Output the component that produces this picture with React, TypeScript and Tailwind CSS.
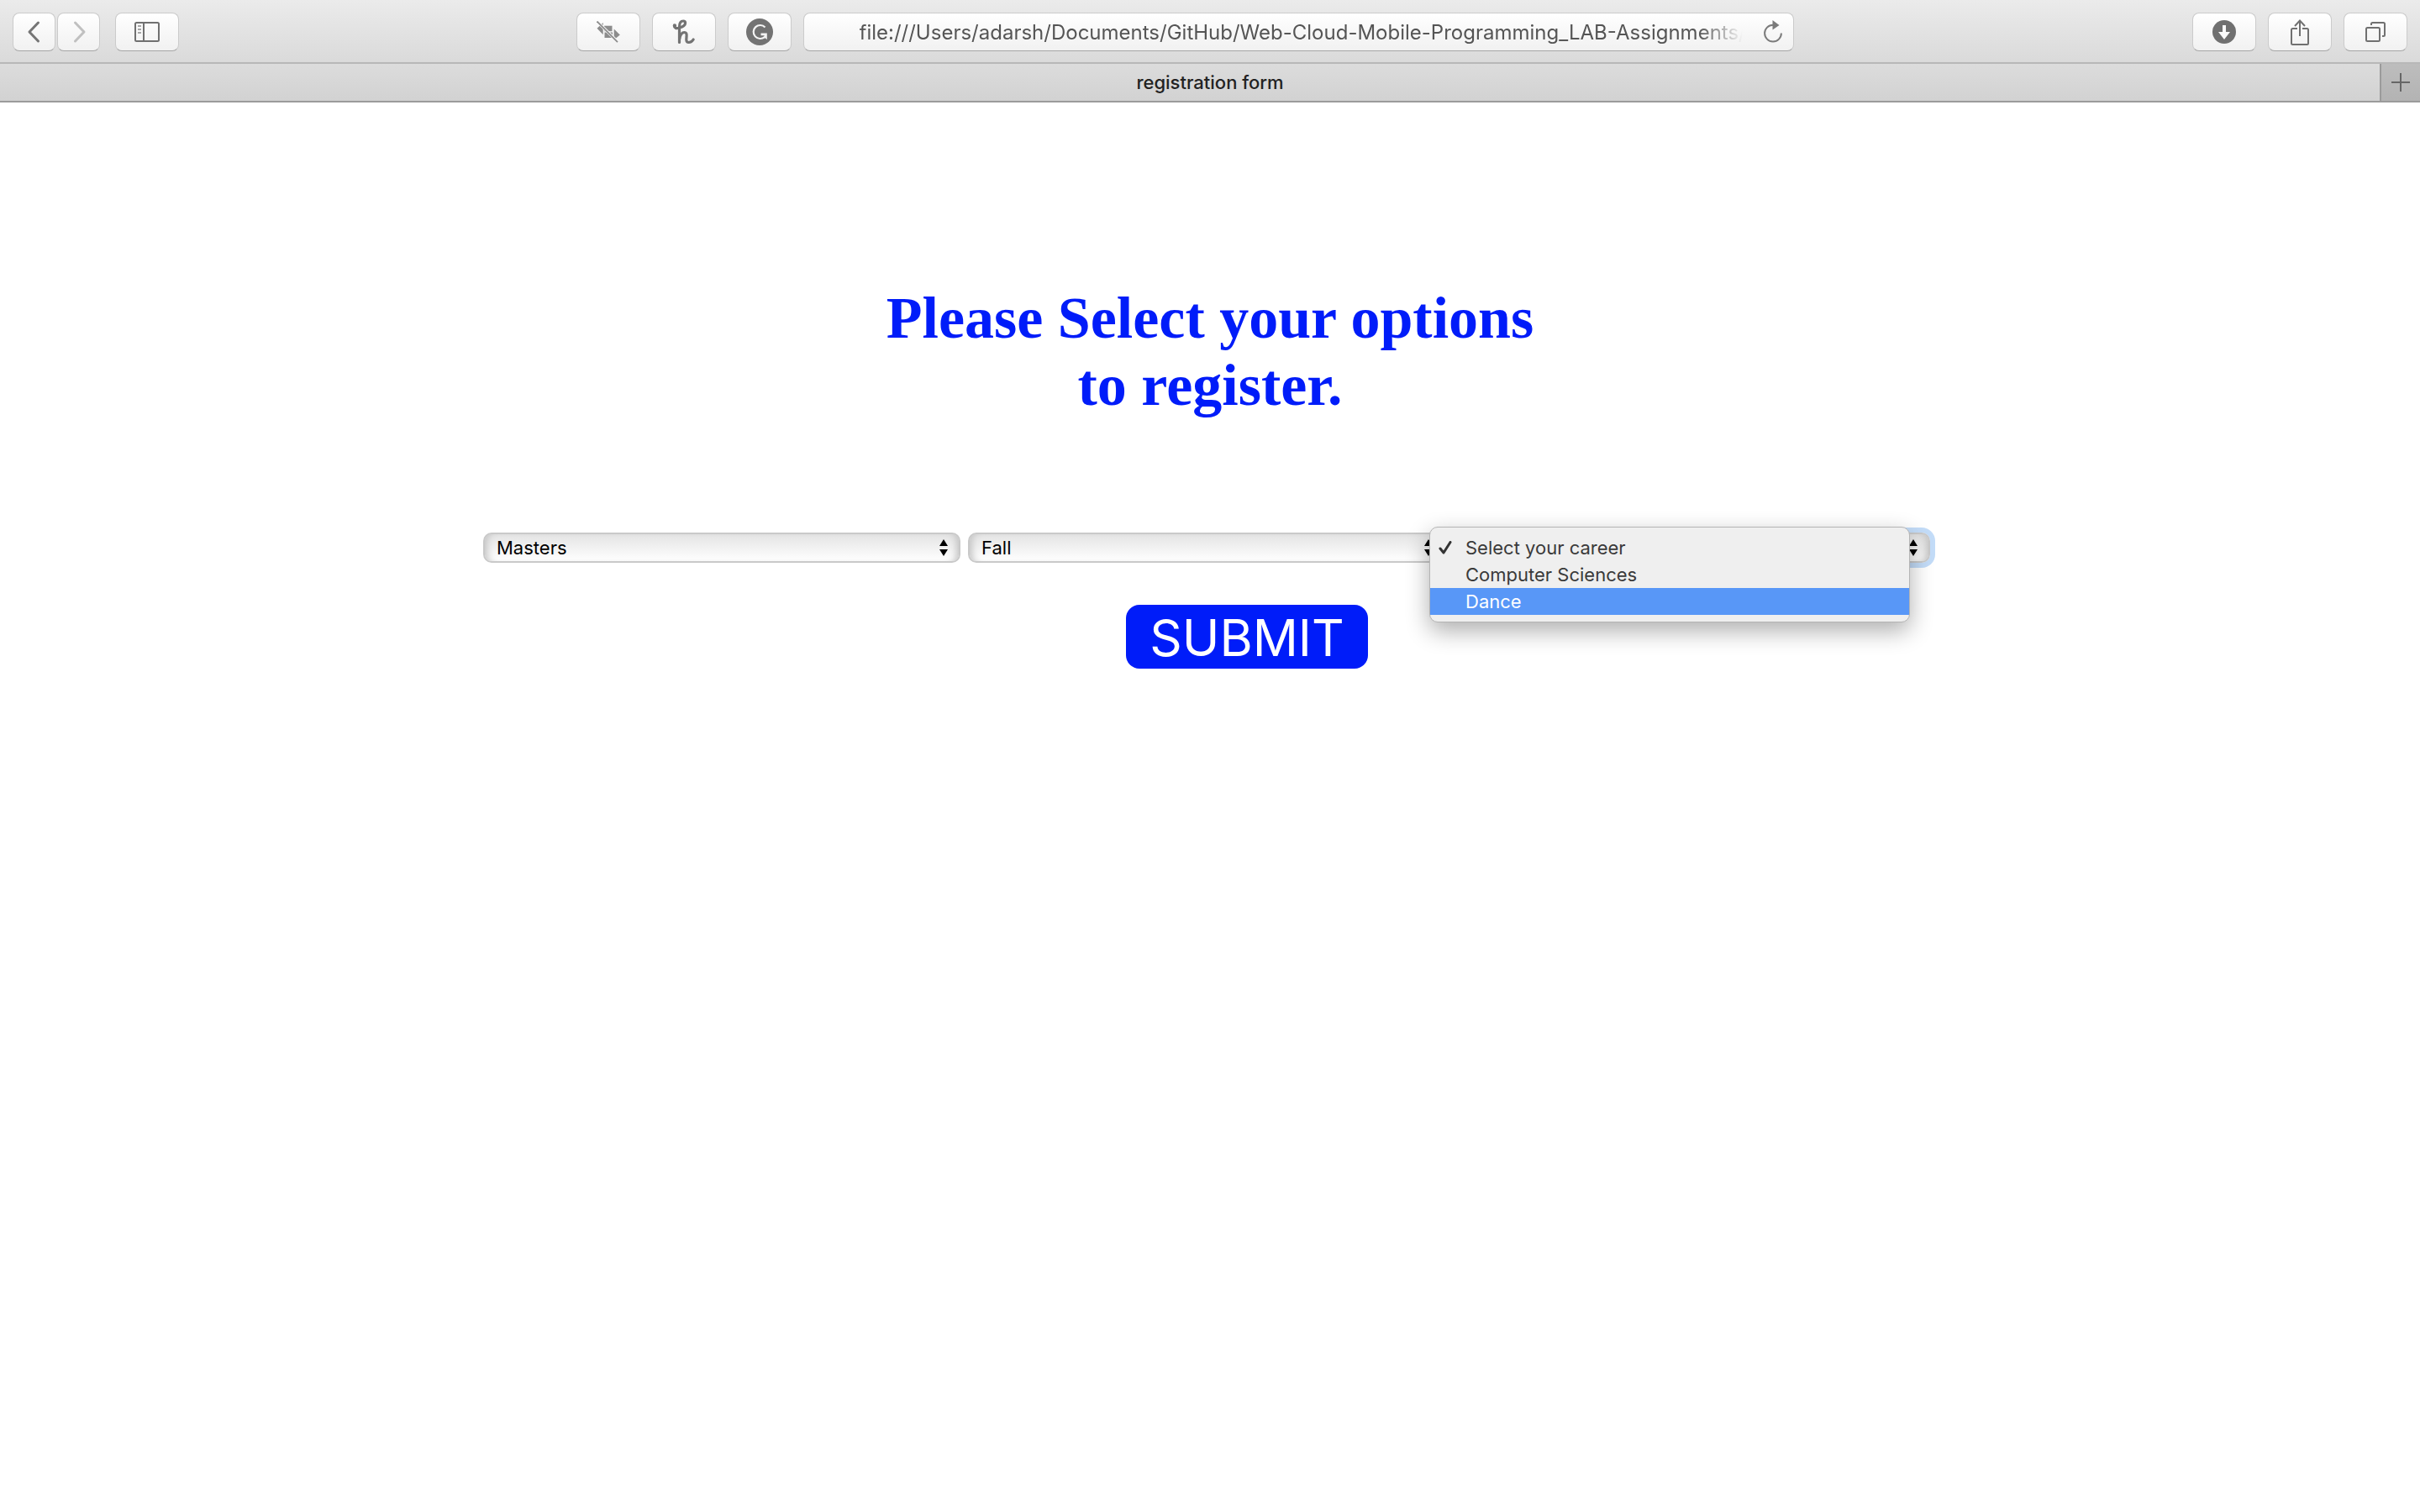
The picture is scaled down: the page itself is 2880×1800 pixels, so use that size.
import type { ReactNode } from "react";

const toolbarButton =
  "flex h-[46px] items-center justify-center rounded-lg border border-[#cbcbcb] border-b-[#a6a6a6] bg-linear-to-b from-white to-[#f1f1f1]";

function ToolbarButton({ label, narrow, children }: { label: string; narrow?: boolean; children: ReactNode }) {
  return (
    <button type="button" aria-label={label} className={`${toolbarButton} ${narrow ? "w-[51px]" : "w-[76px]"}`}>
      {children}
    </button>
  );
}

function BackIcon() {
  return (
    <svg width="24" height="28" viewBox="0 0 24 28" fill="none" stroke="#757575" strokeWidth="3" strokeLinecap="round" strokeLinejoin="round">
      <path d="M16.500 3 6 14l10.500 11" />
    </svg>
  );
}

function ForwardIcon() {
  return (
    <svg width="24" height="28" viewBox="0 0 24 28" fill="none" stroke="#c0c0c0" strokeWidth="3" strokeLinecap="round" strokeLinejoin="round">
      <path d="M7.500 3 18 14 7.500 25" />
    </svg>
  );
}

function SidebarIcon() {
  return (
    <svg width="30" height="24" viewBox="0 0 30 24" fill="none" strokeWidth="2">
      <rect x="1" y="1" width="28" height="22" rx="1.500" stroke="#707070" />
      <path d="M11 1v22" stroke="#707070" />
      <path d="M4 5h4M4 9h4M4 13h4" stroke="#a6a6a6" />
    </svg>
  );
}

function NoTransferIcon() {
  return (
    <svg width="28" height="26" viewBox="0 0 28 26">
      <g fill="#8c8c8c">
        <path d="M0.500 8.700 7.700 2v14.200z" />
        <path d="M9 5.700h9.500v6.500H9z" />
        <path d="M9.500 13.500H19V20H9.500z" />
        <path d="M20.700 9.500 27.800 16.500 20.700 22.500z" />
      </g>
      <path d="M1 0.800 25.500 25.200" stroke="#f8f8f8" strokeWidth="3.400" />
      <path d="M0.500 0.500 25 25.200" stroke="#8a8a8a" strokeWidth="1.800" />
    </svg>
  );
}

function HoneyIcon() {
  return (
    <svg width="28" height="30" viewBox="0 0 28 30" fill="none" stroke="#737373" strokeWidth="3" strokeLinecap="round" strokeLinejoin="round">
      <path d="M2.500 8C2.500 10.600 4.800 11 8 10.200c4-1 7.600-3.300 7.600-5.900 0-1.700-1.100-2.300-2.500-2.300-3 0-4.600 3-4.600 7V27.500" strokeWidth="3.200" />
      <path d="M8.700 23.500c.8-4.500 3-8 5.700-8 2.200 0 2.900 1.500 2.700 4l-.3 4.500c-.1 2.300 1 3.500 2.900 3.500 2.200 0 4.300-1.500 5.500-3.500" strokeWidth="3.200" />
      <circle cx="2.900" cy="7.500" r="1.200" fill="#737373" strokeWidth="2" />
    </svg>
  );
}

function GrammarIcon() {
  return (
    <svg width="32" height="32" viewBox="0 0 32 32" fill="none">
      <circle cx="16" cy="16" r="16" fill="#737373" />
      <path d="M22.500 10.500A8 8 0 1 0 22 22" stroke="#f4f4f4" strokeWidth="2.200" />
      <path d="M17.500 17.600h7.300v7.400l-2.300-1.800-2.500.8 1.700-3.700h-4.200z" fill="#f4f4f4" />
    </svg>
  );
}

function ReloadIcon() {
  return (
    <svg width="24" height="28" viewBox="0 0 24 28" fill="none">
      <path d="M13.500 5.700H12A9.900 9.900 0 1 0 21.900 15.600" stroke="#7b7b7b" strokeWidth="2" />
      <path d="M11.500 0v11.500L19.500 6z" fill="#7b7b7b" />
    </svg>
  );
}

function DownloadIcon() {
  return (
    <svg width="28" height="28" viewBox="0 0 28 28">
      <circle cx="14" cy="14" r="14" fill="#707070" />
      <path d="M12 6h4v8h5l-7 9-7-9h5z" fill="#fafafa" />
    </svg>
  );
}

function ShareIcon() {
  return (
    <svg width="22" height="34" viewBox="0 0 22 34" fill="none" stroke="#707070" strokeWidth="2">
      <path d="M8 13H2.500A1.500 1.500 0 0 0 1 14.500v16A1.500 1.500 0 0 0 2.500 32h17a1.500 1.500 0 0 0 1.500-1.500v-16a1.500 1.500 0 0 0-1.500-1.500H14" />
      <path d="M11 22V4M5 10l6-6.500L17 10" />
    </svg>
  );
}

function TabsIcon() {
  return (
    <svg width="24" height="24" viewBox="0 0 24 24" fill="none" stroke="#707070" strokeWidth="2">
      <rect x="1" y="7" width="16" height="16" rx="1.500" />
      <path d="M7 4V2.500A1.500 1.500 0 0 1 8.500 1h13A1.500 1.500 0 0 1 23 2.500v13a1.500 1.500 0 0 1-1.500 1.500H20" />
    </svg>
  );
}

function Dropdown({ label, value, focused, children }: { label: string; value: string; focused?: boolean; children?: ReactNode }) {
  return (
    <div className="relative w-[568px]">
      <select
        aria-label={label}
        defaultValue={value}
        className={`block h-9 w-full appearance-none rounded-[10px] border-2 border-[#c9c9c9] bg-linear-to-b from-[#e4e4e4] to-white pl-3.5 font-[Inter,sans-serif] text-[22px] leading-8 text-black shadow-[inset_9px_0_8px_-6px_#c4c4c4,inset_-9px_0_8px_-6px_#c4c4c4] outline-none ${focused ? "ring-6 ring-[#c3dcf8]" : ""}`}
      >
        <option>{value}</option>
      </select>
      <svg width="12" height="20" viewBox="0 0 12 20" className="pointer-events-none absolute top-2 right-3.5">
        <path d="M6 0l5 8H1zM6 20l5-8H1z" fill="#000" />
      </svg>
      {children}
    </div>
  );
}

function CareerMenu() {
  const row = "flex h-8 items-center pl-[42px]";
  return (
    <ul
      role="listbox"
      aria-label="Career options"
      className="absolute -top-[7px] -left-7 z-10 w-[572px] rounded-[10px] border border-[#b4b4b4] bg-[#efefef] py-2 font-[Inter,sans-serif] text-[22px] text-[#3a3a3a] shadow-[0_10px_28px_rgba(0,0,0,0.32)]"
    >
      <li role="option" aria-selected="true" className="flex h-8 items-center pl-2.5">
        <svg width="16" height="16" viewBox="0 0 16 16" fill="none" stroke="#333" strokeWidth="3" strokeLinecap="round" strokeLinejoin="round" className="mr-4">
          <path d="M2 9l4 5 8-12.500" />
        </svg>
        Select your career
      </li>
      <li role="option" aria-selected="false" className={row}>Computer Sciences</li>
      <li role="option" aria-selected="false" className={`${row} bg-[#5897f7] text-white`}>Dance</li>
    </ul>
  );
}

export default function App() {
  return (
    <div className="min-h-screen bg-white font-[Inter,sans-serif]">
      <header>
        <div className="flex items-start justify-between border-b-2 border-[#b8b8b8] bg-linear-to-b from-[#ebebeb] to-[#dadada] px-[15px] pt-[15px] pb-[13px]">
          <nav className="flex shrink-0 gap-[18px]">
            <div className="flex gap-0.5">
              <ToolbarButton label="Back" narrow><BackIcon /></ToolbarButton>
              <ToolbarButton label="Forward" narrow><ForwardIcon /></ToolbarButton>
            </div>
            <ToolbarButton label="Show sidebar"><SidebarIcon /></ToolbarButton>
          </nav>
          <div className="mr-0.5 flex w-full max-w-[1449px] gap-3.5">
            <div className="flex shrink-0 gap-3.5">
              <ToolbarButton label="Transfers off"><NoTransferIcon /></ToolbarButton>
              <ToolbarButton label="Honey"><HoneyIcon /></ToolbarButton>
              <ToolbarButton label="Grammar check"><GrammarIcon /></ToolbarButton>
            </div>
            <div className="flex h-[46px] min-w-0 flex-1 items-center rounded-lg border border-[#cbcbcb] border-b-[#a6a6a6] bg-linear-to-b from-white to-[#f1f1f1] pr-3 pl-[66px]">
              <input
                type="text"
                aria-label="Address"
                readOnly
                value="file:///Users/adarsh/Documents/GitHub/Web-Cloud-Mobile-Programming_LAB-Assignments/"
                className="min-w-0 flex-1 bg-transparent mask-r-from-95% mask-r-to-100% pt-0.5 text-[24px] text-[#555] outline-none"
              />
              <button type="button" aria-label="Reload" className="ml-6"><ReloadIcon /></button>
            </div>
          </div>
          <div className="flex shrink-0 gap-3.5">
            <ToolbarButton label="Downloads"><DownloadIcon /></ToolbarButton>
            <ToolbarButton label="Share"><ShareIcon /></ToolbarButton>
            <ToolbarButton label="Show all tabs"><TabsIcon /></ToolbarButton>
          </div>
        </div>
        <div className="flex h-[46px] border-b-2 border-[#9b9b9b] bg-linear-to-b from-[#dcdcdc] to-[#d2d2d2]">
          <div className="flex flex-1 items-center justify-center pl-12 text-[22px] font-medium text-[#222]">registration form</div>
          <button type="button" aria-label="New tab" className="flex w-12 items-center justify-center border-l-2 border-[#9b9b9b] bg-linear-to-b from-[#bdbdbd] to-[#b3b3b3]">
            <svg width="22" height="22" viewBox="0 0 22 22" stroke="#666" strokeWidth="2">
              <path d="M11 0v22M0 11h22" />
            </svg>
          </button>
        </div>
      </header>
      <main className="pt-[217px]">
        <h1 className="text-center font-['Liberation_Serif',serif] text-[70px] leading-[80px] font-bold text-[#001cf9]">
          Please Select your options
          <br />
          to register.
        </h1>
        <form onSubmit={(e) => e.preventDefault()}>
          <div className="mt-[135px] flex justify-center gap-[9px] pr-2">
            <Dropdown label="Degree" value="Masters" />
            <Dropdown label="Term" value="Fall" />
            <Dropdown label="Career" value="Select your career" focused>
              <CareerMenu />
            </Dropdown>
          </div>
          <div className="mt-[50px] flex justify-center pl-[88px]">
            <button type="submit" className="h-[76px] rounded-2xl bg-[#001cf9] px-7 pt-0.5 text-[60px] leading-[74px] text-white">SUBMIT</button>
          </div>
        </form>
      </main>
    </div>
  );
}
